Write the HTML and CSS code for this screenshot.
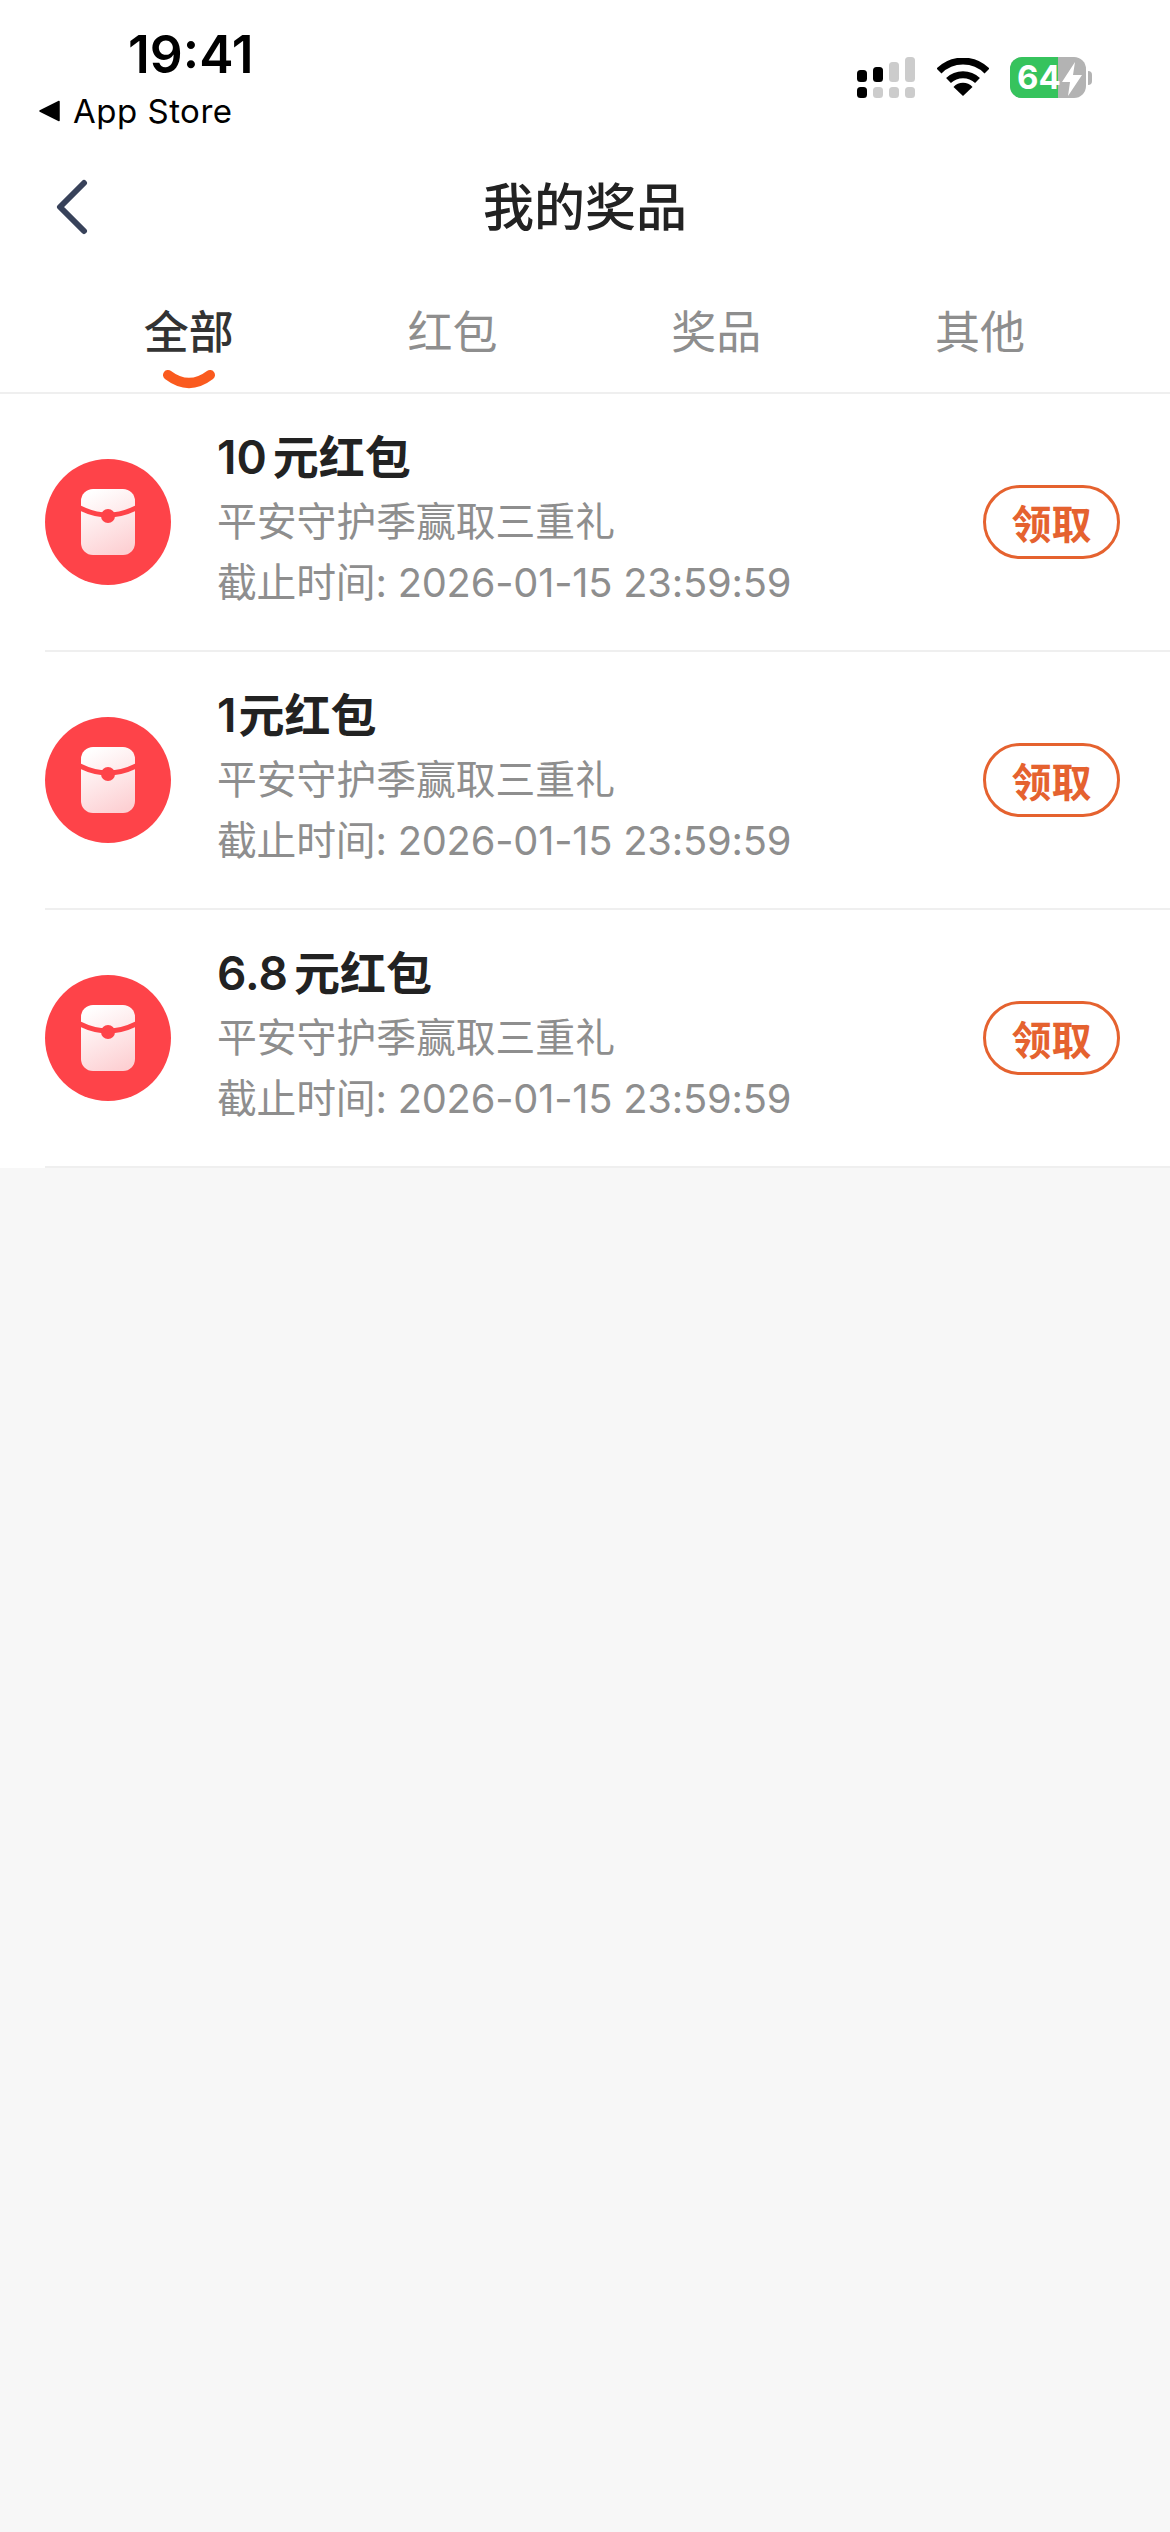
FILE: index.html
```html
<!DOCTYPE html>
<html lang="zh-CN">
<head>
  <meta charset="UTF-8" />
  <meta name="viewport" content="width=device-width, initial-scale=1.0"/>
  <title>我的奖品</title>
  <link rel="stylesheet" href="styles.css">
</head>
<body>
  <div class="status-bar">
    <div class="status-left">
      <div class="time">19:41</div>
      <div class="back-app">
        <svg class="back-tri" width="22" height="22" viewBox="0 0 22 22"><path d="M1 11 L20 1.500 V20.500 Z" fill="#000" stroke="#000" stroke-width="1.500" stroke-linejoin="round"/></svg>
        <span>App Store</span>
      </div>
    </div>
    <div class="status-right">
      <svg width="60" height="42" viewBox="0 0 60 42">
        <rect x="0" y="13" width="10" height="12" rx="3.500" fill="#000"/>
        <rect x="0" y="30" width="10" height="11" rx="3.500" fill="#000"/>
        <rect x="16" y="10" width="10" height="15" rx="3.500" fill="#000"/>
        <rect x="16" y="30" width="10" height="11" rx="3.500" fill="#ccc"/>
        <rect x="32" y="5" width="10" height="20" rx="3.500" fill="#ccc"/>
        <rect x="32" y="30" width="10" height="11" rx="3.500" fill="#ccc"/>
        <rect x="48" y="0" width="10" height="25" rx="3.500" fill="#ccc"/>
        <rect x="48" y="30" width="10" height="11" rx="3.500" fill="#ccc"/>
      </svg>
      <svg class="wifi" width="52" height="38" viewBox="0 0 52 38">
        <path d="M2 13 A34 34 0 0 1 50 13" fill="none" stroke="#000" stroke-width="7"/>
        <path d="M11.500 22.500 A21 21 0 0 1 40.500 22.500" fill="none" stroke="#000" stroke-width="7"/>
        <path d="M16.500 29 A13 13 0 0 1 35.500 29 L26 38 Z" fill="#000"/>
      </svg>
      <div class="battery">
        <div class="battery-body">
          <div class="battery-fill"></div>
          <span class="battery-num">64</span>
          <svg class="bolt" width="22" height="34" viewBox="0 0 22 34"><path d="M14 0 L1 20 H9 L7 34 L21 13 H12 Z" fill="#fff"/></svg>
        </div>
        <div class="battery-cap"></div>
      </div>
    </div>
  </div>

  <div class="nav">
    <svg class="nav-back" width="34" height="60" viewBox="0 0 34 60"><path d="M28 6 L4 30 L28 54" fill="none" stroke="#38425a" stroke-width="6" stroke-linecap="round" stroke-linejoin="round"/></svg>
    <div class="nav-title">我的奖品</div>
  </div>

  <div class="tabs">
    <div class="tab active">全部
      <svg class="tab-smile" width="54" height="22" viewBox="0 0 54 22"><path d="M6 6 Q27 22 48 6" fill="none" stroke="#fa5a1e" stroke-width="10" stroke-linecap="round"/></svg>
    </div>
    <div class="tab">红包</div>
    <div class="tab">奖品</div>
    <div class="tab">其他</div>
  </div>

  <div class="list">
    <div class="row">
      <div class="row-inner">
        <div class="icon">
          <svg width="56" height="68" viewBox="0 0 56 68">
            <defs><linearGradient id="env" x1="0.3" y1="0" x2="0.7" y2="1"><stop offset="0" stop-color="#fff"/><stop offset="1" stop-color="#fdd0d3"/></linearGradient></defs>
            <rect x="1" y="1" width="54" height="66" rx="12" fill="url(#env)"/>
            <path d="M0 20 Q14 27 28 27 Q42 27 56 20" fill="none" stroke="#fe4349" stroke-width="5"/>
            <circle cx="28" cy="28" r="7" fill="#fe4349"/>
          </svg>
        </div>
        <div class="info">
          <div class="info-title"><span class="num">10</span>元红包</div>
          <div class="info-sub desc">平安守护季赢取三重礼</div>
          <div class="info-sub deadline">截止时间: 2026-01-15 23:59:59</div>
        </div>
        <div class="claim">领取</div>
      </div>
    </div>
    <div class="row">
      <div class="row-inner">
        <div class="icon">
          <svg width="56" height="68" viewBox="0 0 56 68">
            <rect x="1" y="1" width="54" height="66" rx="12" fill="url(#env)"/>
            <path d="M0 20 Q14 27 28 27 Q42 27 56 20" fill="none" stroke="#fe4349" stroke-width="5"/>
            <circle cx="28" cy="28" r="7" fill="#fe4349"/>
          </svg>
        </div>
        <div class="info">
          <div class="info-title"><span class="num tight">1</span>元红包</div>
          <div class="info-sub desc">平安守护季赢取三重礼</div>
          <div class="info-sub deadline">截止时间: 2026-01-15 23:59:59</div>
        </div>
        <div class="claim">领取</div>
      </div>
    </div>
    <div class="row">
      <div class="row-inner">
        <div class="icon">
          <svg width="56" height="68" viewBox="0 0 56 68">
            <rect x="1" y="1" width="54" height="66" rx="12" fill="url(#env)"/>
            <path d="M0 20 Q14 27 28 27 Q42 27 56 20" fill="none" stroke="#fe4349" stroke-width="5"/>
            <circle cx="28" cy="28" r="7" fill="#fe4349"/>
          </svg>
        </div>
        <div class="info">
          <div class="info-title"><span class="num">6.8</span>元红包</div>
          <div class="info-sub desc">平安守护季赢取三重礼</div>
          <div class="info-sub deadline">截止时间: 2026-01-15 23:59:59</div>
        </div>
        <div class="claim">领取</div>
      </div>
    </div>
  </div>
</body>
</html>
```

FILE: styles.css
```css
html, body {
  height: 100%;
}
body {
  margin: 0;
  background-color: #f7f7f7;
  font-family: "Inter", "Noto Sans CJK SC", sans-serif;
  color: #222;
}
.status-bar {
  height: 148px;
  background: #fff;
  display: flex;
  justify-content: space-between;
  box-sizing: border-box;
}
.status-left {
  padding: 26px 0 0 39px;
}
.time {
  font-size: 51.5px;
  line-height: 56px;
  font-weight: 600;
  color: #000;
  padding-left: 89px;
}
.back-app {
  display: flex;
  align-items: center;
  gap: 12px;
  font-size: 33px;
  line-height: 40px;
  color: #000;
  margin-top: 9px;
  letter-spacing: 0.5px;
}
.status-right {
  display: flex;
  align-items: flex-start;
  padding: 57px 0 0 0;
  margin-right: 78px;
}
.wifi {
  margin-left: 20px;
  margin-top: 1px;
}
.battery {
  display: flex;
  align-items: center;
  margin-left: 21px;
}
.battery-body {
  position: relative;
  width: 76px;
  height: 41px;
  border-radius: 12px;
  background: #b3b3b3;
  overflow: hidden;
}
.battery-fill {
  position: absolute;
  left: 0;
  top: 0;
  bottom: 0;
  width: 48px;
  background: #36c35d;
}
.battery-num {
  position: absolute;
  left: 7px;
  top: 0;
  font-size: 33px;
  line-height: 41px;
  font-weight: 700;
  color: #fff;
  font-family: "Inter", sans-serif;
}
.bolt {
  position: absolute;
  left: 51px;
  top: 5px;
}
.battery-cap {
  width: 4px;
  height: 14px;
  background: #b3b3b3;
  border-radius: 0 4px 4px 0;
  margin-left: 2px;
}
.nav {
  height: 110px;
  background: #fff;
  display: flex;
  align-items: center;
  justify-content: center;
  position: relative;
}
.nav-back {
  position: absolute;
  left: 56px;
  top: 29px;
}
.nav-title {
  font-size: 51px;
  font-weight: 500;
  color: #222;
  padding-top: 2px;
}
.tabs {
  background: #fff;
  padding: 0 58px 0 57px;
  height: 136px;
  display: grid;
  grid-template-columns: repeat(4, 1fr);
  border-bottom: 2px solid #efefef;
  box-sizing: border-box;
}
.tab {
  position: relative;
  text-align: center;
  font-size: 45px;
  line-height: 50px;
  color: #8e8e8e;
  padding-top: 50px;
}
.tab.active {
  color: #333;
  font-weight: 500;
}
.tab-smile {
  position: absolute;
  left: 50%;
  top: 111px;
  margin-left: -27px;
}
.list {
  background: #fff;
}
.row {
  height: 258px;
  padding-left: 45px;
  box-sizing: border-box;
}
.row-inner {
  height: 100%;
  display: flex;
  align-items: center;
  border-bottom: 2px solid #efefef;
  box-sizing: border-box;
  padding-right: 50px;
}
.icon {
  width: 126px;
  height: 126px;
  border-radius: 50%;
  background: #fe4349;
  display: flex;
  align-items: center;
  justify-content: center;
  flex-shrink: 0;
}
.info {
  flex: 1;
  margin-left: 46px;
  padding-bottom: 4px;
}
.info-title {
  font-size: 46px;
  line-height: 58px;
  font-weight: 600;
  color: #222;
  display: flex;
  align-items: center;
}
.num {
  margin-right: 6px;
}
.num.tight {
  margin-right: 2px;
}
.info-sub {
  font-size: 39.8px;
  line-height: 60px;
  color: #8e8e8e;
}
.desc {
  margin-top: 6px;
}
.deadline {
  margin-top: 1px;
  letter-spacing: -0.2px;
}
.claim {
  width: 137px;
  height: 74px;
  box-sizing: border-box;
  border: 3px solid #e5622f;
  border-radius: 37px;
  color: #e5622f;
  font-size: 40px;
  font-weight: 600;
  display: flex;
  align-items: center;
  justify-content: center;
}
```
